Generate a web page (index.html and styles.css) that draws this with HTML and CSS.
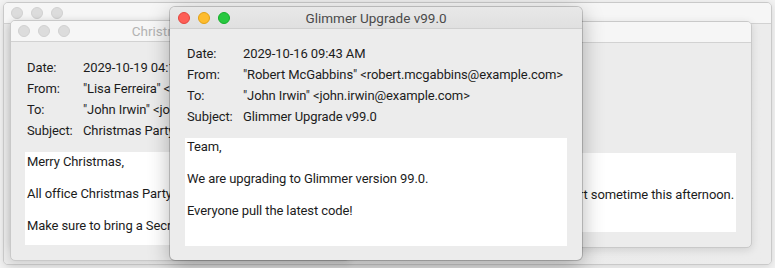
FILE: index.html
```html
<!DOCTYPE html>
<html lang="en">
<head>
    <meta charset="UTF-8" />
    <title>Email Windows</title>
    <link rel="stylesheet" href="styles.css">
</head>
<body>
    <div class="desktop">
        <div class="window inactive win-inbox">
            <div class="titlebar">
                <div class="lights"><span></span><span></span><span></span></div>
                <div class="title">Inbox</div>
            </div>
            <div class="pane"></div>
        </div>

        <div class="window inactive win-party-copy">
            <div class="titlebar">
                <div class="lights"><span></span><span></span><span></span></div>
                <div class="title">Christmas Party</div>
            </div>
            <div class="mail loose">
                <div class="headers">
                    <span>Date:</span><span>2029-10-19 04:12 PM</span>
                    <span>From:</span><span>"Lisa Ferreira" &lt;lisa.ferreira@example.com&gt;</span>
                    <span>To:</span><span>"John Irwin" &lt;john.irwin@example.com&gt;</span>
                    <span>Subject:</span><span>Christmas Party</span>
                </div>
                <div class="body">
                    <p>Merry Christmas,</p>
                    <p class="tail">All office Christmas Party is going to start sometime this afternoon.</p>
                    <p>Make sure to bring a Secret Santa gift!</p>
                </div>
            </div>
        </div>

        <div class="window inactive win-party">
            <div class="titlebar">
                <div class="lights"><span></span><span></span><span></span></div>
                <div class="title">Christmas Party</div>
            </div>
            <div class="mail loose">
                <div class="headers">
                    <span>Date:</span><span>2029-10-19 04:12 PM</span>
                    <span>From:</span><span>"Lisa Ferreira" &lt;lisa.ferreira@example.com&gt;</span>
                    <span>To:</span><span>"John Irwin" &lt;john.irwin@example.com&gt;</span>
                    <span>Subject:</span><span>Christmas Party</span>
                </div>
                <div class="body">
                    <p>Merry Christmas,</p>
                    <p>All office Christmas Party is going to start sometime this afternoon.</p>
                    <p>Make sure to bring a Secret Santa gift!</p>
                </div>
            </div>
        </div>

        <div class="window active win-glimmer">
            <div class="titlebar">
                <div class="lights"><span class="close"></span><span class="min"></span><span class="max"></span></div>
                <div class="title">Glimmer Upgrade v99.0</div>
            </div>
            <div class="mail">
                <div class="headers">
                    <span>Date:</span><span>2029-10-16 09:43 AM</span>
                    <span>From:</span><span>"Robert McGabbins" &lt;robert.mcgabbins@example.com&gt;</span>
                    <span>To:</span><span>"John Irwin" &lt;john.irwin@example.com&gt;</span>
                    <span>Subject:</span><span>Glimmer Upgrade v99.0</span>
                </div>
                <div class="body">
                    <p>Team,</p>
                    <p>We are upgrading to Glimmer version 99.0.</p>
                    <p>Everyone pull the latest code!</p>
                </div>
            </div>
        </div>
    </div>
</body>
</html>
```

FILE: styles.css
```css
body {
    margin: 0;
    padding: 0;
    background-color: #f3f3f3;
    font-family: Roboto, "Liberation Sans", Arial, sans-serif;
    font-size: 13px;
    color: #1c1c1c;
}

.desktop {
    position: relative;
    width: 775px;
    height: 268px;
    overflow: hidden;
}

.window {
    position: absolute;
    display: flex;
    flex-direction: column;
    box-sizing: border-box;
    background-color: #ececec;
    border-radius: 5px;
    overflow: hidden;
}

.window.inactive {
    border: 1px solid #c9c9c9;
    box-shadow: 0 2px 8px rgba(0, 0, 0, 0.12);
}

.window.active {
    box-shadow: 0 0 0 1px rgba(0, 0, 0, 0.18), 0 6px 22px rgba(0, 0, 0, 0.3);
}

.win-inbox {
    left: 3px;
    top: 2px;
    width: 769px;
    height: 263px;
}

.win-party-copy {
    left: 10px;
    top: 21px;
    width: 742px;
    height: 227px;
}

.win-party {
    left: 10px;
    top: 20px;
    width: 340px;
    height: 241px;
}

.win-glimmer {
    left: 170px;
    top: 7px;
    width: 412px;
    height: 253px;
}

/* title bar */

.titlebar {
    display: grid;
    grid-template-columns: 1fr auto 1fr;
    align-items: center;
    height: 22px;
    flex-shrink: 0;
    box-sizing: border-box;
    border-bottom: 1px solid #d2d2d2;
    background-color: #f6f6f6;
}

.active .titlebar {
    background: linear-gradient(#e8e8e8, #e0e0e0);
    border-bottom-color: #cfcfcf;
}

.inactive .titlebar {
    margin-top: -1px;
}

.lights {
    display: flex;
    gap: 8px;
    padding-left: 8px;
}

.inactive .lights {
    padding-left: 7px;
}

.lights span {
    width: 12px;
    height: 12px;
    box-sizing: border-box;
    border-radius: 50%;
    background-color: #dcdcdc;
    border: 1px solid #d0d0d0;
}

.lights .close {
    background-color: #fe5f57;
    border-color: #e2463f;
}

.lights .min {
    background-color: #febc2e;
    border-color: #e1a116;
}

.lights .max {
    background-color: #28c840;
    border-color: #14ae2a;
}

.title {
    font-size: 13.5px;
    color: #b3b3b3;
    white-space: nowrap;
}

.active .title {
    color: #4a4a4a;
}

/* message */

.pane {
    flex: 1;
    background: linear-gradient(90deg, #e9e9e9, #ececec);
}

.mail {
    flex: 1;
    display: flex;
    flex-direction: column;
    padding: 14px 15px;
    min-height: 0;
    letter-spacing: -0.1px;
}

.mail.loose {
    padding: 15px 15px 15px 14px;
}

.headers {
    display: grid;
    grid-template-columns: 56px 1fr;
    grid-auto-rows: 21px;
    align-items: center;
    padding-left: 2px;
    white-space: nowrap;
}

.body {
    flex: 1;
    margin-top: 11px;
    padding: 1px 2px;
    background-color: #fff;
    line-height: 16px;
    white-space: nowrap;
    overflow: hidden;
}

.loose .body {
    padding-top: 2px;
}

.body p {
    margin: 0 0 16px;
}

.body .tail {
    text-align: right;
}
```
